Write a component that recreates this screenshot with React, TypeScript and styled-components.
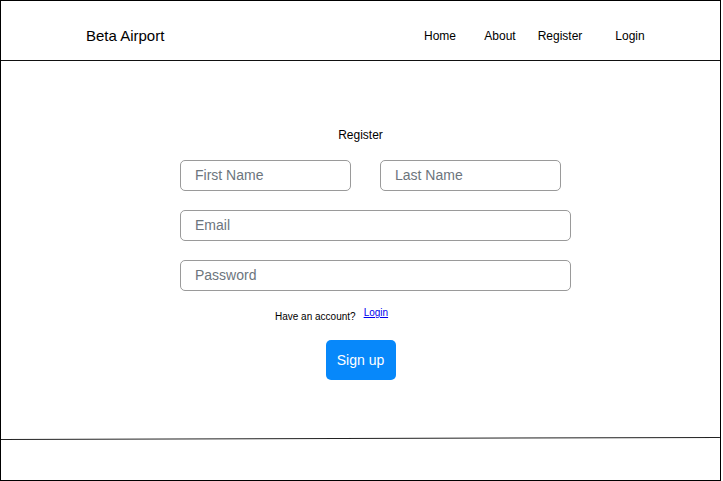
import React from "react";
import styled, { createGlobalStyle } from "styled-components";

const Global = createGlobalStyle`
  * { box-sizing: border-box; }
  html, body { margin: 0; padding: 0; background: #ffffff; }
  body { font-family: "Liberation Sans", Arial, Helvetica, sans-serif; color: #000; }
`;

const Frame = styled.div`
  width: 721px;
  height: 481px;
  border: 1px solid #000;
  display: flex;
  flex-direction: column;
  overflow: hidden;
  background: #fff;
`;

const Header = styled.header`
  height: 60px;
  flex: none;
  border-bottom: 1px solid #111;
  display: flex;
  align-items: flex-start;
  justify-content: space-between;
  padding: 27px 50px 0 85px;
`;

const Brand = styled.div`
  font-size: 15px;
  line-height: 15px;
  color: #000;
`;

const Nav = styled.nav`
  display: flex;
`;

const NavItem = styled.a<{ $w: number }>`
  width: ${(p) => p.$w}px;
  text-align: center;
  font-size: 12px;
  line-height: 16px;
  color: #000;
  text-decoration: none;
  cursor: pointer;
`;

const Main = styled.main`
  flex: 1;
  display: flex;
  flex-direction: column;
  align-items: center;
  padding-top: 67px;
`;

const Title = styled.div`
  font-size: 12px;
  line-height: 14px;
  margin-bottom: 18px;
`;

const Form = styled.form`
  align-self: flex-start;
  margin-left: 179px;
  width: 391px;
  display: flex;
  flex-direction: column;
  gap: 19px;
`;

const Row = styled.div`
  display: flex;
  gap: 29px;
`;

const Field = styled.input<{ $w?: number }>`
  width: ${(p) => (p.$w ? `${p.$w}px` : "100%")};
  height: 31px;
  border: 1px solid #9a9a9a;
  border-radius: 5px;
  padding: 0 14px 1px;
  font-family: "Liberation Sans", Arial, Helvetica, sans-serif;
  font-size: 14px;
  color: #333;
  background: #fff;
  outline: none;
  &::placeholder { color: #6c757d; opacity: 1; }
`;

const AccountRow = styled.div`
  align-self: flex-start;
  margin-left: 274px;
  margin-top: 16px;
  display: flex;
  align-items: flex-start;
  gap: 8px;
  font-size: 10px;
  line-height: 12px;
`;

const AccountText = styled.span`
  margin-top: 4px;
  color: #000;
`;

const LoginLink = styled.a`
  color: #0000ee;
  text-decoration: underline;
  cursor: pointer;
`;

const SignUp = styled.button`
  margin-top: 17px;
  width: 70px;
  height: 40px;
  border: none;
  border-radius: 5px;
  background: #0788fa;
  color: #fff;
  font-family: "Liberation Sans", Arial, Helvetica, sans-serif;
  font-size: 14px;
  cursor: pointer;
`;

const Footer = styled.footer`
  height: 42px;
  flex: none;
  border-top: 1px solid #222;
  transform: rotate(-0.16deg);
`;

export default function App() {
  return (
    <>
      <Global />
      <Frame>
        <Header>
          <Brand>Beta Airport</Brand>
          <Nav>
            <NavItem $w={60}>Home</NavItem>
            <NavItem $w={60}>About</NavItem>
            <NavItem $w={60}>Register</NavItem>
            <NavItem $w={80}>Login</NavItem>
          </Nav>
        </Header>
        <Main>
          <Title>Register</Title>
          <Form onSubmit={(e) => e.preventDefault()}>
            <Row>
              <Field $w={171} placeholder="First Name" />
              <Field $w={181} placeholder="Last Name" />
            </Row>
            <Field placeholder="Email" />
            <Field type="password" placeholder="Password" />
          </Form>
          <AccountRow>
            <AccountText>Have an account?</AccountText>
            <LoginLink>Login</LoginLink>
          </AccountRow>
          <SignUp>Sign up</SignUp>
        </Main>
        <Footer />
      </Frame>
    </>
  );
}
